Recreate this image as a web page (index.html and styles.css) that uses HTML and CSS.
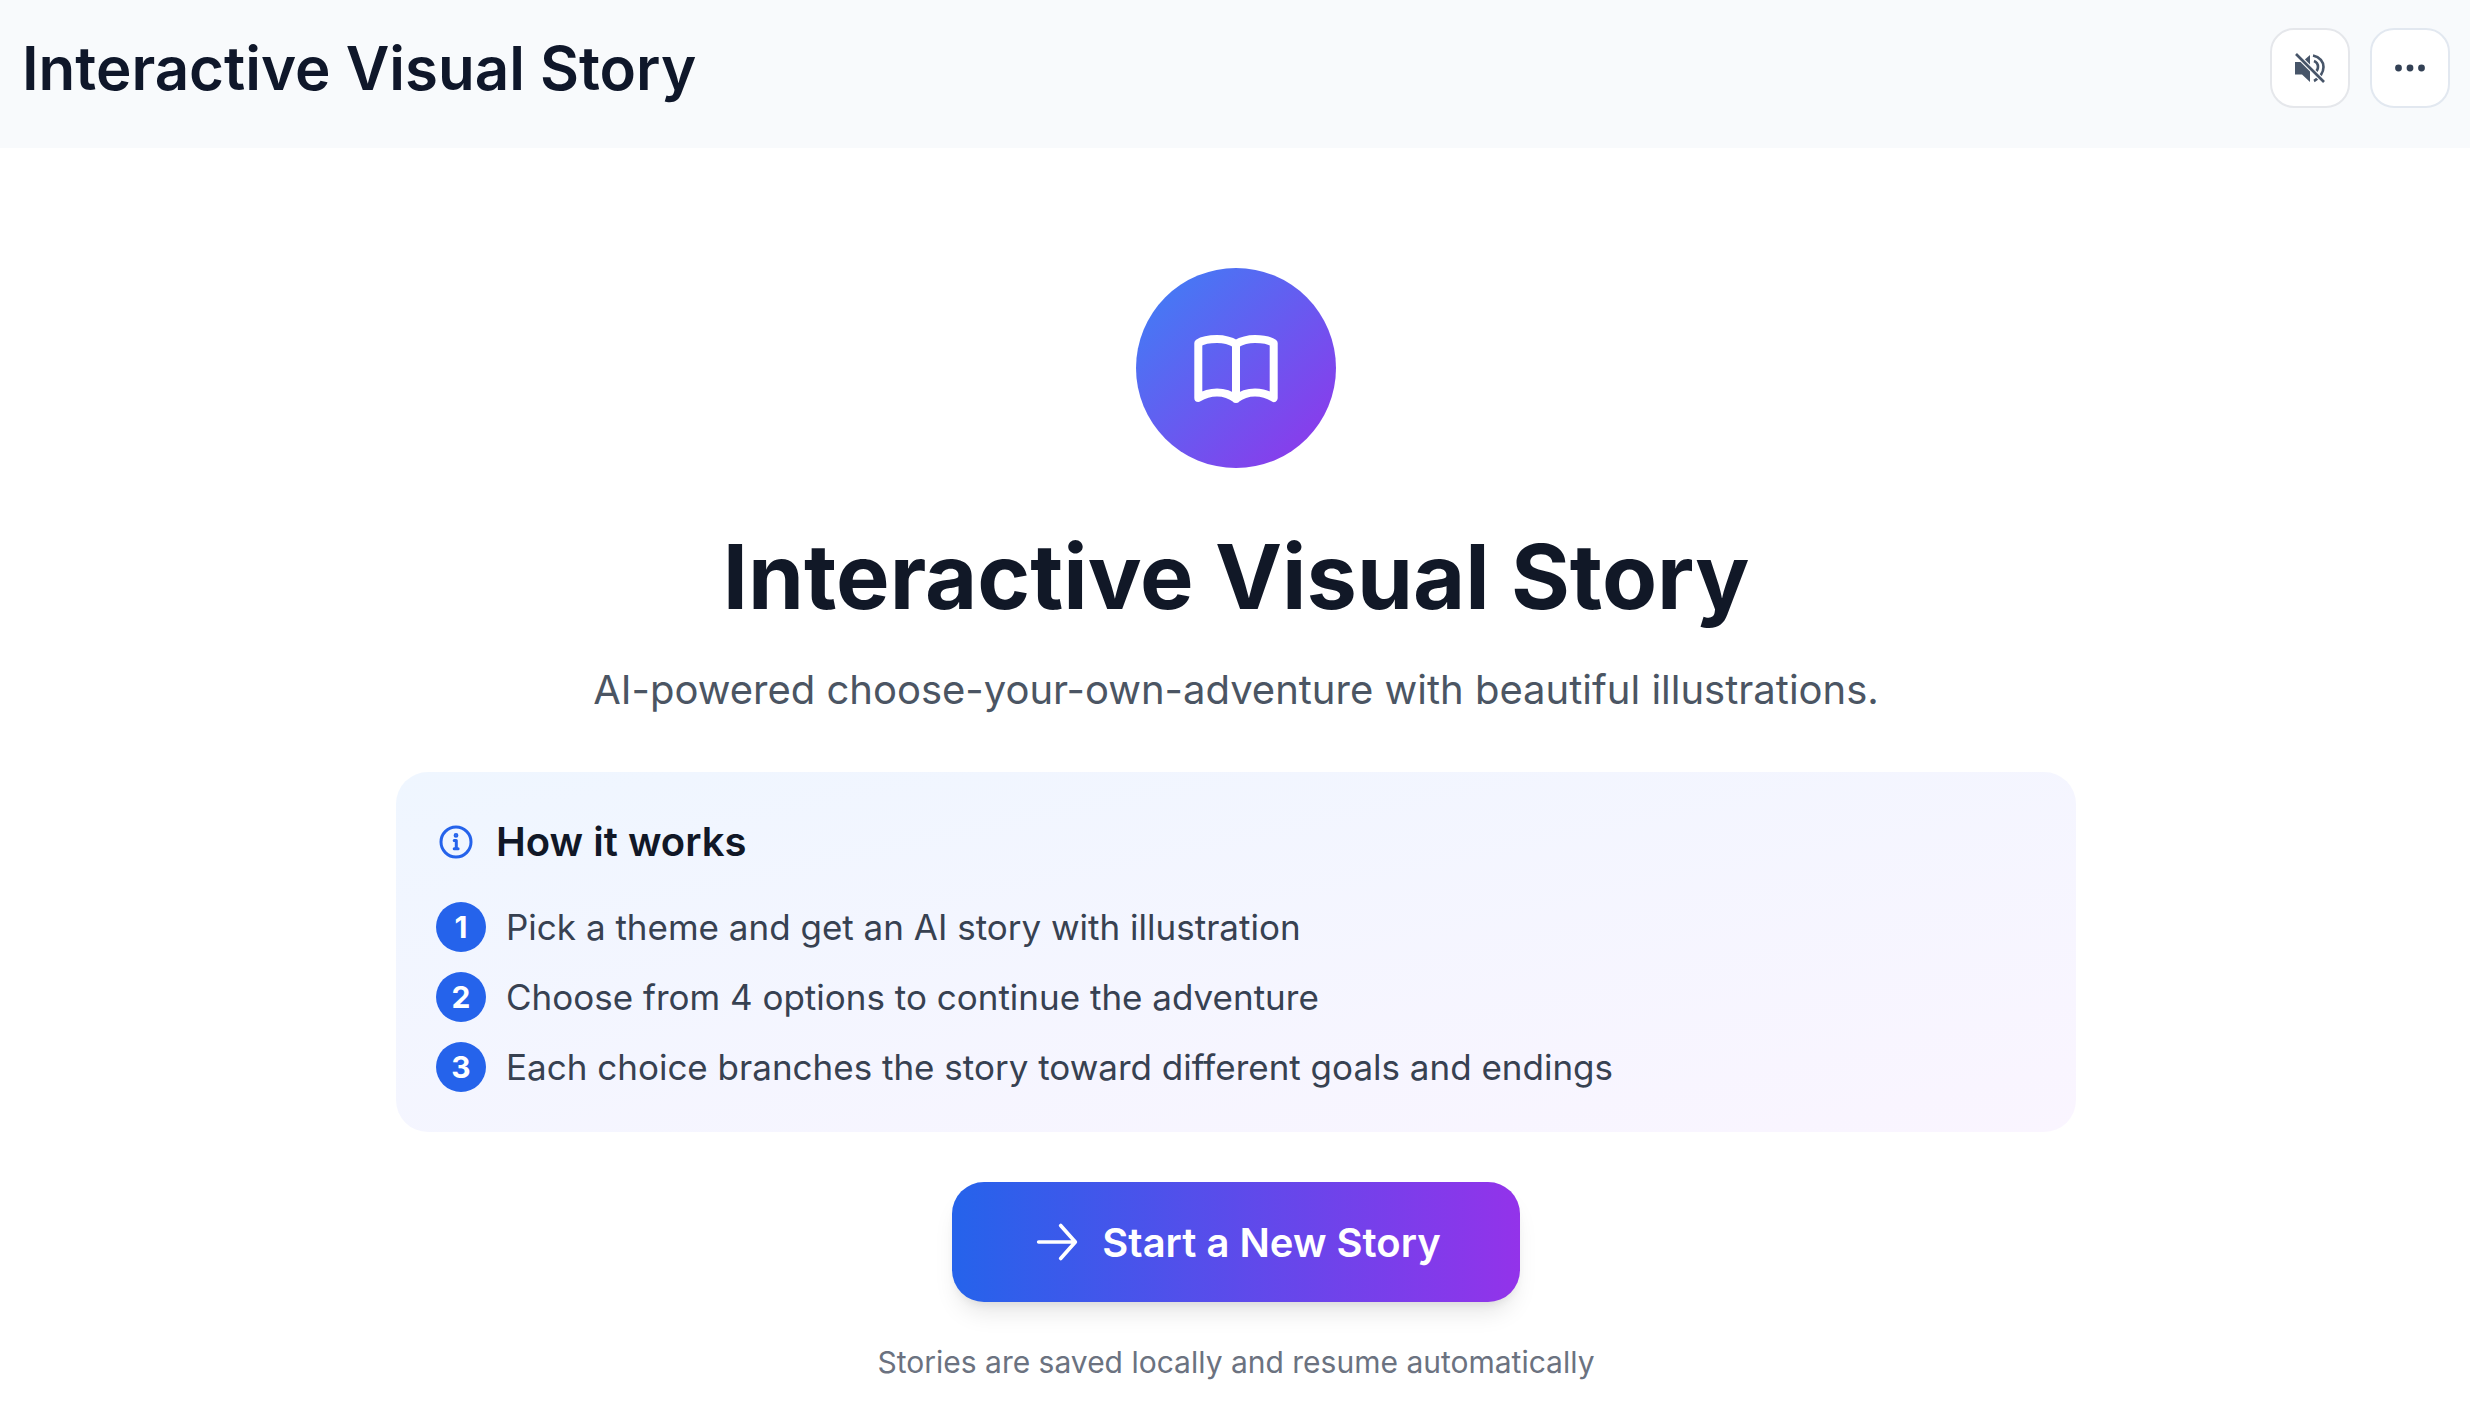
FILE: index.html
```html
<!DOCTYPE html>
<html lang="en">
<head>
    <meta charset="UTF-8">
    <title>Interactive Visual Story</title>
    <link rel="stylesheet" href="styles.css">
</head>
<body>
    <header class="topbar">
        <div class="topbar-title">Interactive Visual Story</div>
        <div class="topbar-actions">
            <button class="icon-btn">
                <svg class="mute-icon" viewBox="0 0 30 30" fill="none" stroke="#475569" stroke-width="2.6">
                    <path d="M0 9h7l8-7v27l-8-7.500H0z" fill="#475569" stroke="none"/>
                    <path d="M18 2.500c7 1.500 10.500 6.500 10.500 11.500S25 25 19 28M19 8c2.500 1 4 3.500 4 6s-1 4-3 5.500"/>
                    <path d="M1 1l28 28" stroke="white" stroke-width="5"/>
                    <path d="M1 1l28 28"/>
                </svg>
            </button>
            <button class="icon-btn icon-btn-more">
                <svg class="more-icon" viewBox="0 0 30 8" fill="#334155">
                    <circle cx="3.500" cy="4" r="3.400"/>
                    <circle cx="15" cy="4" r="3.400"/>
                    <circle cx="26.500" cy="4" r="3.400"/>
                </svg>
            </button>
        </div>
    </header>

    <main class="welcome">
        <div class="logo">
            <svg viewBox="0 0 100 100" fill="none" stroke="white" stroke-width="8" stroke-linecap="round" stroke-linejoin="round">
                <path d="M50 26C44 22.500 37 21 31 21C24 21 17 22 12.300 25V80C17 77 24 74.500 31 74.500C38 74.500 45 77 50 81C55 77 62 74.500 69 74.500C76 74.500 83 77 87.700 80V25C83 22 76 21 69 21C63 21 56 22.500 50 26ZM50 26V81"/>
            </svg>
        </div>
        <h1>Interactive Visual Story</h1>
        <p class="subtitle">AI-powered choose-your-own-adventure with beautiful illustrations.</p>

        <section class="how-panel">
            <h2>
                <svg class="info-icon" viewBox="0 0 24 24" fill="none" stroke="#2563eb" stroke-width="2" stroke-linecap="round" stroke-linejoin="round">
                    <circle cx="12" cy="12" r="10"/>
                    <path d="M10.800 11h1.400v5.500M10.800 16.500h2.600"/>
                    <circle cx="12" cy="7.600" r=".6" fill="#2563eb"/>
                </svg>
                How it works
            </h2>
            <ol class="steps">
                <li><span class="step-num">1</span>Pick a theme and get an AI story with illustration</li>
                <li><span class="step-num">2</span>Choose from 4 options to continue the adventure</li>
                <li><span class="step-num">3</span>Each choice branches the story toward different goals and endings</li>
            </ol>
        </section>

        <button class="start-btn">
            <svg viewBox="0 0 24 24" fill="none" stroke="white" stroke-width="2" stroke-linecap="round" stroke-linejoin="round">
                <path d="M2 12h20M14 3l8 9-8 9"/>
            </svg>
            Start a New Story
        </button>
        <p class="footnote">Stories are saved locally and resume automatically</p>
    </main>
</body>
</html>
```

FILE: styles.css
```css
body {
    font-family: 'Inter', 'Liberation Sans', sans-serif;
    margin: 0;
    background-color: white;
    color: #0f172a;
}

/* top bar */
.topbar {
    height: 148px;
    background-color: #f8fafc;
    display: flex;
    align-items: center;
    justify-content: space-between;
    padding: 0 20px 12px 22px;
    box-sizing: border-box;
}
.topbar-title {
    font-size: 60px;
    font-weight: 600;
    color: #0f172a;
}
.topbar-actions {
    display: flex;
    gap: 20px;
}
.icon-btn {
    width: 80px;
    height: 80px;
    padding: 0;
    background-color: white;
    border: 2px solid #e5e7eb;
    border-radius: 24px;
    display: flex;
    align-items: center;
    justify-content: center;
}
.icon-btn-more {
    border-color: #e2e8f0;
}
.mute-icon {
    width: 30px;
    height: 30px;
}
.more-icon {
    width: 30px;
    height: 8px;
}

/* welcome */
.welcome {
    display: flex;
    flex-direction: column;
    align-items: center;
    padding: 120px 0 0 2px;
}
.logo {
    width: 200px;
    height: 200px;
    border-radius: 50%;
    background-image: linear-gradient(135deg, #3b82f6, #9333ea);
    display: flex;
    align-items: center;
    justify-content: center;
}
.logo svg {
    width: 100px;
    height: 100px;
}
h1 {
    font-size: 90px;
    font-weight: 700;
    line-height: 1.2;
    margin: 55px 0 0;
    color: #111827;
}
.subtitle {
    font-size: 40px;
    line-height: 60px;
    margin: 29px 0 0;
    color: #4b5563;
}

/* how it works */
.how-panel {
    width: 1680px;
    box-sizing: border-box;
    margin-top: 52px;
    padding: 42px 40px 40px;
    border-radius: 32px;
    background-image: linear-gradient(to bottom right, #eff6ff, #faf5ff);
}
h2 {
    display: flex;
    align-items: center;
    gap: 22px;
    font-size: 40px;
    font-weight: 600;
    line-height: 56px;
    margin: 0 0 32px;
    color: #111827;
}
.info-icon {
    width: 36px;
    height: 36px;
    margin-left: 2px;
}
.steps {
    list-style: none;
    margin: 0;
    padding: 0;
    display: flex;
    flex-direction: column;
    gap: 20px;
}
.steps li {
    display: flex;
    align-items: center;
    gap: 20px;
    font-size: 35px;
    line-height: 50px;
    color: #374151;
}
.step-num {
    width: 50px;
    height: 50px;
    border-radius: 50%;
    background-color: #2563eb;
    color: white;
    font-size: 30px;
    font-weight: 700;
    display: flex;
    align-items: center;
    justify-content: center;
}

/* start button */
.start-btn {
    width: 568px;
    height: 120px;
    margin-top: 50px;
    padding: 0 0 0 4px;
    border: none;
    border-radius: 32px;
    background-image: linear-gradient(to right, #2563eb, #9333ea);
    box-shadow: 0 16px 24px -6px rgba(0, 0, 0, 0.1), 0 6px 10px -4px rgba(0, 0, 0, 0.08);
    color: white;
    font-family: inherit;
    font-size: 40px;
    font-weight: 600;
    display: flex;
    align-items: center;
    justify-content: center;
    gap: 23px;
}
.start-btn svg {
    width: 44px;
    height: 44px;
}
.footnote {
    font-size: 30px;
    line-height: 44px;
    margin: 38px 0 0;
    color: #6b7280;
}
```
